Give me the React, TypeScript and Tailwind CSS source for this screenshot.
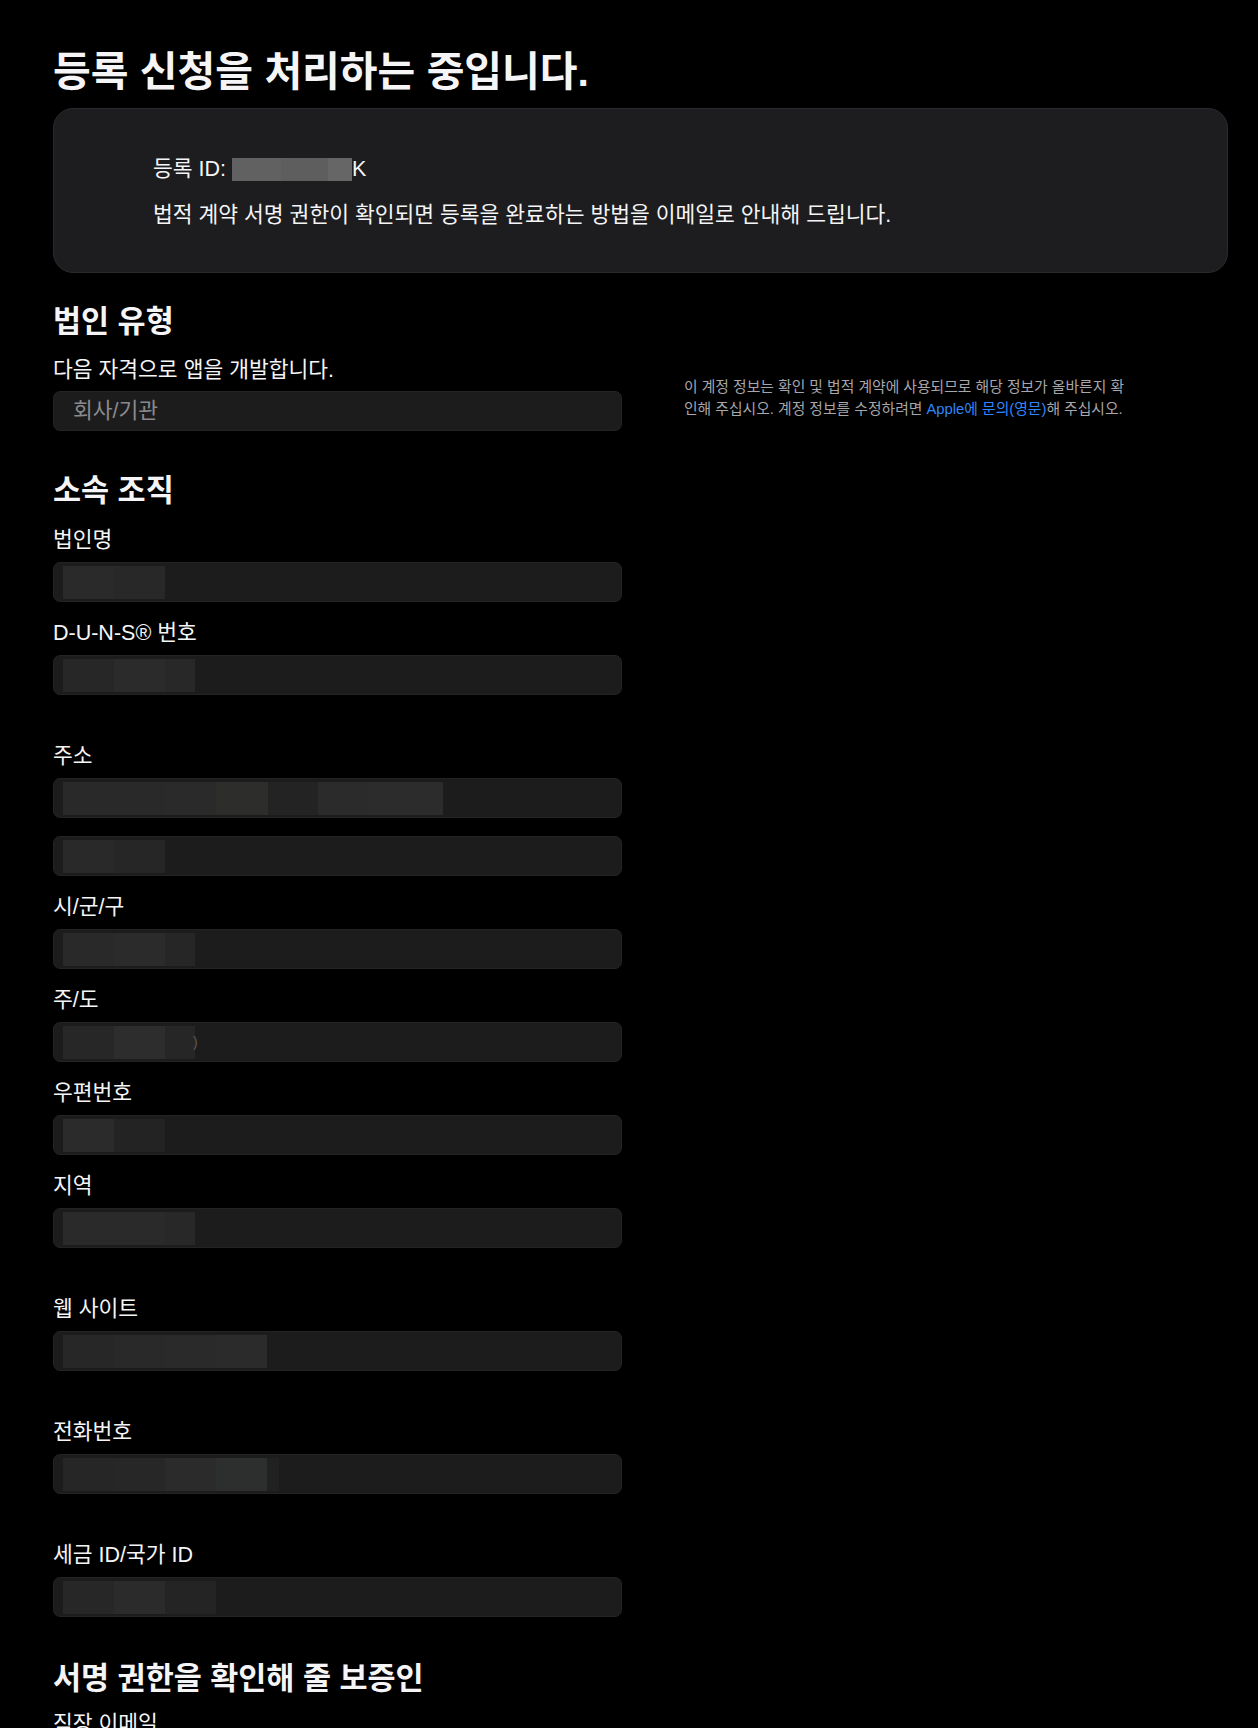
import * as React from "react"

type Cell = [number, string]

const FONT = {
  fontFamily: '"Liberation Sans", "Noto Sans CJK KR", "Noto Sans", sans-serif',
}

/**
 * Pixelated (redacted) value inside a field
 */
function Redacted({ cells, tail }: { cells: Cell[]; tail?: string }) {
  return (
    <div className="flex h-[33px] items-center">
      {cells.map(([w, c], i) => (
        <div key={i} className="h-[33px]" style={{ width: w, backgroundColor: c }} />
      ))}
      {tail && <span className="ml-[-2px] text-[14px] text-[#5a5a5a]">{tail}</span>}
    </div>
  )
}

function Box({ children }: { children?: React.ReactNode }) {
  return (
    <div className="flex h-[40px] w-[569px] items-center rounded-[7px] border border-[#232325] bg-[#1c1c1d] pl-[9px]">
      {children}
    </div>
  )
}

interface FieldProps {
  label: string
  rows: Cell[][]
  spaced?: boolean
  tail?: string
}

function Field({ label, rows, spaced, tail }: FieldProps) {
  return (
    <div className={spaced ? "mt-[30px] mb-[19px]" : "mb-[19px]"}>
      <div className="h-[24px] text-[21.5px] leading-[24px]">{label}</div>
      <div className="mt-[10px] flex flex-col gap-[18px]">
        {rows.map((cells, i) => (
          <Box key={i}>
            <Redacted cells={cells} tail={i === rows.length - 1 ? tail : undefined} />
          </Box>
        ))}
      </div>
    </div>
  )
}

export default function App() {
  return (
    <div className="min-h-screen bg-black text-[#f5f5f7]" style={FONT}>
      <div className="px-[53px] pt-[49px] pb-24">
        <h1 className="text-[41px] font-bold leading-[46px]">
          등록 신청을 처리하는 중입니다.
        </h1>

        <div className="mt-[13px] w-[1175px] rounded-[20px] border border-[#2a2a2c] bg-[#1d1d1f] pt-[46px] pb-[43px] pl-[99px]">
          <p className="flex items-center text-[21.5px] leading-[28px]">
            <span>등록 ID:&nbsp;</span>
            <span className="inline-flex h-[23px]">
              <span className="w-[49px] bg-[#616161]" />
              <span className="w-[47px] bg-[#5e5e5e]" />
              <span className="w-[24px] bg-[#666666]" />
            </span>
            <span>K</span>
          </p>
          <p className="mt-[18px] text-[21.5px] leading-[28px]">
            법적 계약 서명 권한이 확인되면 등록을 완료하는 방법을 이메일로 안내해 드립니다.
          </p>
        </div>

        <div className="mt-[30px] flex">
          <div className="w-[569px]">
            <h2 className="text-[30.5px] font-bold leading-[36px]">법인 유형</h2>
            <p className="mt-[19px] text-[21.5px] leading-[24px]">다음 자격으로 앱을 개발합니다.</p>
            <div className="mt-[9px] flex h-[40px] items-center rounded-[7px] border border-[#232325] bg-[#1c1c1d] pl-[19px] text-[21.5px] text-[#8a8a8e]">
              회사/기관
            </div>

            <h2 className="mt-[41px] text-[30.5px] font-bold leading-[36px]">소속 조직</h2>
            <div className="mt-[20px] flex flex-col">
              <Field label="법인명" rows={[[[51, "#2a2a2a"], [51, "#282828"]]]} />
              <Field
                label="D-U-N-S® 번호"
                rows={[[[51, "#272727"], [51, "#2b2b2b"], [30, "#282828"]]]}
              />
              <Field
                label="주소"
                spaced
                rows={[
                  [
                    [51, "#292929"],
                    [51, "#292929"],
                    [51, "#2a2a2a"],
                    [52, "#2d2d2b"],
                    [50, "#232323"],
                    [51, "#2b2b2b"],
                    [74, "#2c2c2c"],
                  ],
                  [[51, "#292929"], [51, "#262626"]],
                ]}
              />
              <Field label="시/군/구" rows={[[[51, "#292929"], [51, "#2b2b2b"], [30, "#262626"]]]} />
              <Field
                label="주/도"
                tail=")"
                rows={[[[51, "#272727"], [51, "#2d2d2d"], [30, "#262626"]]]}
              />
              <Field label="우편번호" rows={[[[51, "#2b2b2b"], [51, "#232323"]]]} />
              <Field label="지역" rows={[[[51, "#2a2a2a"], [51, "#2a2a2a"], [30, "#282828"]]]} />
              <Field
                label="웹 사이트"
                spaced
                rows={[[[51, "#272727"], [51, "#292929"], [51, "#2a2a2a"], [51, "#2b2b2b"]]]}
              />
              <Field
                label="전화번호"
                spaced
                rows={[
                  [
                    [51, "#262626"],
                    [51, "#272727"],
                    [51, "#2b2b2b"],
                    [51, "#2d2e2e"],
                    [12, "#212121"],
                  ],
                ]}
              />
              <Field
                label="세금 ID/국가 ID"
                spaced
                rows={[[[51, "#272727"], [51, "#2b2b2b"], [51, "#242424"]]]}
              />
            </div>

            <h2 className="mt-[24px] text-[30.5px] font-bold leading-[36px]">서명 권한을 확인해 줄 보증인</h2>
            <div className="mt-[16px] flex flex-col">
              <Field label="직장 이메일" rows={[[[51, "#272727"], [51, "#292929"], [51, "#2a2a2a"]]]} />
            </div>
          </div>

          <div className="ml-[62px] w-[500px] pt-[73px]">
            <p className="text-[14.8px] leading-[22px] text-[#a6a6ab]">
              이 계정 정보는 확인 및 법적 계약에 사용되므로 해당 정보가 올바른지 확
              <br />
              인해 주십시오. 계정 정보를 수정하려면{" "}
              <a href="#" className="text-[#2f86ff]">
                Apple에 문의(영문)
              </a>
              해 주십시오.
            </p>
          </div>
        </div>
      </div>
    </div>
  )
}
